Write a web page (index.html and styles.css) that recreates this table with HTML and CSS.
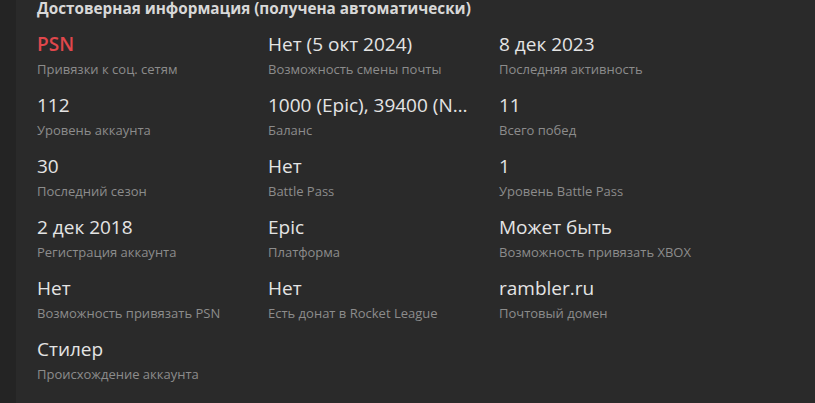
FILE: index.html
```html
<!DOCTYPE html>
<html lang="ru">
<head>
    <meta charset="UTF-8">
    <meta name="viewport" content="width=device-width, initial-scale=1.0">
    <title>Достоверная информация</title>
    <link rel="stylesheet" href="styles.css">
</head>
<body>
    <div class="panel">
        <h3 class="panel-title">Достоверная информация (получена автоматически)</h3>
        <div class="info-grid">
            <div class="info-item">
                <div class="info-value red">PSN</div>
                <div class="info-label">Привязки к соц. сетям</div>
            </div>
            <div class="info-item">
                <div class="info-value">Нет (5 окт 2024)</div>
                <div class="info-label">Возможность смены почты</div>
            </div>
            <div class="info-item">
                <div class="info-value">8 дек 2023</div>
                <div class="info-label">Последняя активность</div>
            </div>

            <div class="info-item">
                <div class="info-value">112</div>
                <div class="info-label">Уровень аккаунта</div>
            </div>
            <div class="info-item">
                <div class="info-value"><span class="hint faint">1000 (Epic), 39400 (Nintendo)</span></div>
                <div class="info-label">Баланс</div>
            </div>
            <div class="info-item">
                <div class="info-value">11</div>
                <div class="info-label">Всего побед</div>
            </div>

            <div class="info-item">
                <div class="info-value">30</div>
                <div class="info-label">Последний сезон</div>
            </div>
            <div class="info-item">
                <div class="info-value">Нет</div>
                <div class="info-label">Battle Pass</div>
            </div>
            <div class="info-item">
                <div class="info-value">1</div>
                <div class="info-label">Уровень Battle Pass</div>
            </div>

            <div class="info-item">
                <div class="info-value">2 дек 2018</div>
                <div class="info-label">Регистрация аккаунта</div>
            </div>
            <div class="info-item">
                <div class="info-value">Epic</div>
                <div class="info-label">Платформа</div>
            </div>
            <div class="info-item">
                <div class="info-value">Может быть</div>
                <div class="info-label">Возможность привязать XBOX</div>
            </div>

            <div class="info-item">
                <div class="info-value">Нет</div>
                <div class="info-label">Возможность привязать PSN</div>
            </div>
            <div class="info-item">
                <div class="info-value">Нет</div>
                <div class="info-label">Есть донат в Rocket League</div>
            </div>
            <div class="info-item">
                <div class="info-value">rambler.ru</div>
                <div class="info-label">Почтовый домен</div>
            </div>

            <div class="info-item">
                <div class="info-value"><span class="hint">Стилер</span></div>
                <div class="info-label">Происхождение аккаунта</div>
            </div>
        </div>
    </div>
</body>
</html>
```

FILE: styles.css
```css
body {
    font-family: 'Open Sans', 'Noto Sans', sans-serif;
    background: #242424;
    color: #e2e2e2;
    margin: 0;
    padding: 0;
    overflow: hidden;
}

.panel {
    margin-left: 16px;
    padding: 0 0 20px 21px;
    background: #2a2a2a;
    min-height: 403px;
    box-sizing: border-box;
}

.panel-title {
    margin: 0 0 16px 0;
    font-size: 15.3px;
    line-height: 16px;
    font-weight: bold;
    color: #d8d8d8;
}

.info-grid {
    display: grid;
    grid-template-columns: repeat(3, 231px);
    row-gap: 15px;
}

.info-item {
    padding-right: 30px;
    min-width: 0;
}

.info-value {
    font-size: 19px;
    line-height: 24px;
    color: #e4e4e4;
    white-space: nowrap;
    overflow: hidden;
    text-overflow: ellipsis;
}

.info-value.red {
    color: #e0474c;
    font-weight: 600;
}

.info-label {
    margin-top: 4px;
    font-size: 13px;
    line-height: 18px;
    color: #8c8c8c;
}

.hint {
    border-bottom: 1px dotted #8c8c8c;
}

.hint.faint {
    border-bottom: 1px solid #333333;
}
```
